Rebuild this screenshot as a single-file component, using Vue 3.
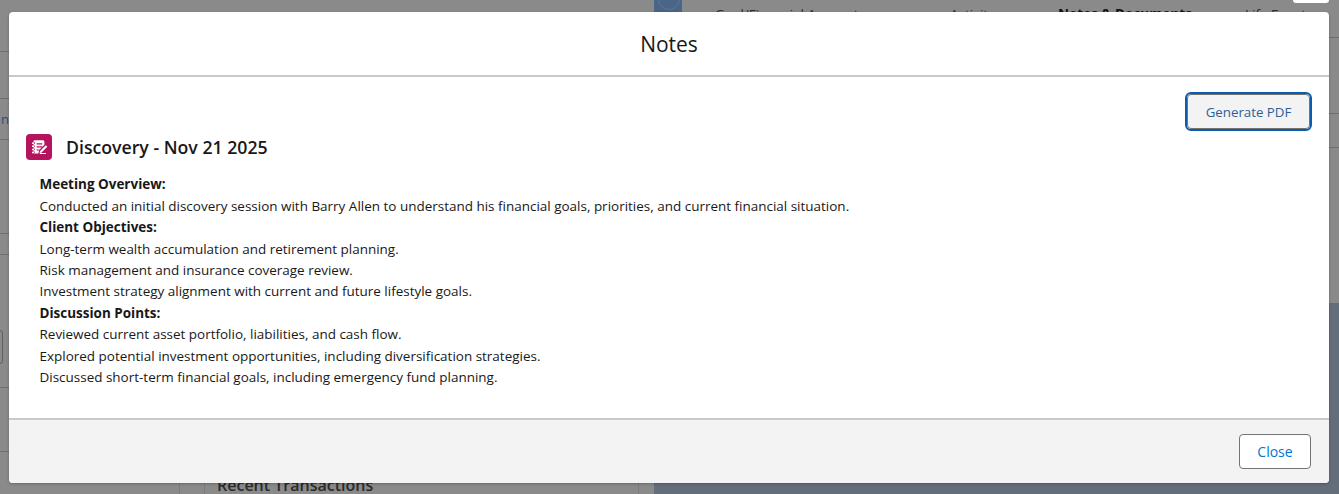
<script setup>
const leftRows = [
  { id: 1, h: 52 },
  { id: 2, h: 47 },
  { id: 3, h: 41, link: 'n' },
  { id: 4, h: 94 },
  { id: 5, h: 21 },
  { id: 6, h: 133, box: true },
  { id: 7, h: 64 }
]

const tabs = [
  { label: 'Goal/Financial Accounts', width: 235 },
  { label: 'Activity', width: 108 },
  { label: 'Notes & Documents', width: 187, bold: true },
  { label: 'Life Events', width: 100 }
]

const notes = [
  { text: 'Meeting Overview:', bold: true },
  { text: 'Conducted an initial discovery session with Barry Allen to understand his financial goals, priorities, and current financial situation.' },
  { text: 'Client Objectives:', bold: true },
  { text: 'Long-term wealth accumulation and retirement planning.' },
  { text: 'Risk management and insurance coverage review.' },
  { text: 'Investment strategy alignment with current and future lifestyle goals.' },
  { text: 'Discussion Points:', bold: true },
  { text: 'Reviewed current asset portfolio, liabilities, and cash flow.' },
  { text: 'Explored potential investment opportunities, including diversification strategies.' },
  { text: 'Discussed short-term financial goals, including emergency fund planning.' }
]
</script>

<template>
  <div class="page">
    <!-- page behind the modal, already dimmed -->
    <div class="left-col">
      <div v-for="row in leftRows" :key="row.id" class="left-row" :style="{ height: row.h + 'px' }">
        <span v-if="row.link" class="cut-link">{{ row.link }}</span>
        <span v-if="row.box" class="cut-box"></span>
      </div>
      <div class="recent">
        <div class="recent-card">Recent Transactions</div>
      </div>
    </div>
    <div class="right-col">
      <div class="right-top">
        <div class="avatar"><span class="avatar-ring"></span></div>
        <div class="tabs">
          <span
            v-for="tab in tabs"
            :key="tab.label"
            class="tab"
            :class="{ bold: tab.bold }"
            :style="{ width: tab.width + 'px' }"
          >{{ tab.label }}</span>
        </div>
        <span class="white-tag"></span>
      </div>
      <div class="right-line l1"></div>
      <div class="right-line l2"></div>
      <div class="right-line l3"></div>
      <div class="blue-area"></div>
    </div>

    <div class="modal">
      <header class="modal-head">Notes</header>
      <div class="modal-body">
        <div class="actions">
          <button class="pdf-btn">Generate PDF</button>
        </div>
        <div class="title-row">
          <span class="note-icon">
            <svg viewBox="0 0 26 26" width="26" height="26">
              <path fill="#fff" d="M8.6 6.2h8.2c.9 0 1.6.7 1.6 1.6v3l-5.2 5.3-.9 3.3H8.6c-.6 0-1-.4-1-1V7.2c0-.6.4-1 1-1z" />
              <path fill="#b5135d" d="M10.6 9.2h5.6v1.2h-5.6zM10.6 12.3h5.6v1.2h-5.6zM10.6 15.4h2.8v1.2h-2.8z" />
              <path fill="#fff" d="M6 8.4h3.2v1.5H6zM6 11.6h3.2v1.5H6zM6 14.8h3.2v1.5H6zM6 17.8h3.2v1.5H6z" />
              <path fill="#b5135d" d="M8 8h.7v1.9H8zM8 11.2h.7v1.9H8zM8 14.4h.7v1.9H8zM8 17.4h.7v1.9H8z" />
              <path fill="#fff" d="M19.8 11.2l1.5 1.5-5.7 5.8-2.1.6.6-2.1z" />
              <path fill="#fff" d="M13.8 19.1h6.2v1h-6.2z" />
            </svg>
          </span>
          <h2 class="title">Discovery - Nov 21 2025</h2>
        </div>
        <div class="note-text">
          <p v-for="line in notes" :key="line.text" :class="{ bold: line.bold }">{{ line.text }}</p>
        </div>
      </div>
      <footer class="modal-foot">
        <button class="close-btn">Close</button>
      </footer>
    </div>
  </div>
</template>

<style>
html,
body {
  margin: 0;
  background: #8a8a8a;
}
</style>

<style scoped>
.page {
  position: relative;
  width: 1339px;
  height: 494px;
  overflow: hidden;
  display: flex;
  background: #8a8a8a;
  font-family: "Open Sans", "Noto Sans", sans-serif;
}

.left-col {
  width: 654px;
  flex: none;
  display: flex;
  flex-direction: column;
}

.left-row {
  position: relative;
  flex: none;
  box-sizing: border-box;
  border-bottom: 1px solid #6e6e6e;
}

.cut-link {
  position: absolute;
  left: 1px;
  bottom: 11px;
  font-size: 13px;
  color: #27517e;
}

.cut-box {
  position: absolute;
  left: -6px;
  top: 75px;
  width: 7px;
  height: 32px;
  border: 1px solid #5f5f5f;
  border-radius: 3px;
}

.recent {
  flex: 1;
  min-height: 0;
  margin-left: 179px;
  padding-left: 24px;
  border-left: 1px solid #7c7c7c;
}

.recent-card {
  width: 435px;
  height: 42px;
  box-sizing: border-box;
  padding: 22px 0 0 12px;
  border-left: 1px solid #7c7c7c;
  border-right: 1px solid #7c7c7c;
  font-size: 16px;
  font-weight: 600;
  color: #2a2a2a;
  white-space: nowrap;
}

.right-col {
  position: relative;
  flex: 1;
  min-width: 0;
}

.right-top {
  display: flex;
  height: 38px;
  box-sizing: border-box;
  border-bottom: 1px solid #6e6e6e;
  position: relative;
}

.avatar {
  width: 28px;
  height: 12px;
  background: #4a6585;
  flex: none;
  overflow: hidden;
  position: relative;
}

.avatar-ring {
  position: absolute;
  left: 4px;
  top: -12px;
  width: 20px;
  height: 20px;
  border: 1px solid #5c7694;
  border-radius: 50%;
}

.tabs {
  display: flex;
  padding: 5px 0 0 33px;
  font-size: 13.5px;
  color: #2a2a2a;
}

.tab {
  flex: none;
  white-space: nowrap;
}

.tab.bold {
  font-weight: 700;
  color: #111;
}

.white-tag {
  position: absolute;
  left: 639px;
  top: -3px;
  width: 36px;
  height: 6px;
  background: #fff;
  border-radius: 3px;
}

.right-line {
  border-bottom: 1px solid #6e6e6e;
}

.l1 {
  height: 75px;
}

.l2 {
  height: 33px;
}

.l3 {
  height: 155px;
  border-bottom: 0;
}

.blue-area {
  height: 191px;
  background: #646e7a;
}

.modal {
  position: absolute;
  left: 9px;
  top: 12px;
  width: 1320px;
  height: 471px;
  display: flex;
  flex-direction: column;
  background: #fff;
  border-radius: 4px;
  box-shadow: 0 1px 3px rgba(0, 0, 0, 0.25);
  overflow: hidden;
  color: #181818;
}

.modal-head {
  height: 63px;
  flex: none;
  display: flex;
  align-items: center;
  justify-content: center;
  border-bottom: 2px solid #c9c9c9;
  font-size: 21px;
}

.modal-body {
  flex: 1;
  min-height: 0;
}

.actions {
  display: flex;
  justify-content: flex-end;
  padding: 17px 19px 0 0;
}

.pdf-btn {
  width: 123px;
  height: 35px;
  box-sizing: border-box;
  background: #f3f3f3;
  border: 1px solid #747474;
  outline: 2px solid #0b5cab;
  border-radius: 4px;
  font: 13.3px "Open Sans", "Noto Sans", sans-serif;
  color: #2f5f97;
  padding: 0;
}

.title-row {
  display: flex;
  align-items: center;
  gap: 14px;
  padding: 5px 0 0 17px;
}

.note-icon {
  width: 26px;
  height: 26px;
  flex: none;
  background: #b5135d;
  border-radius: 4px;
  display: block;
}

.note-icon svg {
  display: block;
}

.title {
  margin: 0;
  font-size: 17.7px;
  font-weight: 600;
  color: #181818;
}

.note-text {
  padding: 14.4px 0 0 30.5px;
  font-size: 13.47px;
  line-height: 21.4px;
}

.note-text p {
  margin: 0;
}

.note-text .bold {
  font-weight: 700;
}

.modal-foot {
  height: 63px;
  flex: none;
  display: flex;
  align-items: center;
  justify-content: flex-end;
  padding-right: 18px;
  background: #f3f3f3;
  border-top: 2px solid #c9c9c9;
}

.close-btn {
  width: 72px;
  height: 35px;
  box-sizing: border-box;
  background: #fff;
  border: 1px solid #747474;
  border-radius: 4px;
  font: 14px "Open Sans", "Noto Sans", sans-serif;
  color: #0176d3;
  padding: 0;
}
</style>
